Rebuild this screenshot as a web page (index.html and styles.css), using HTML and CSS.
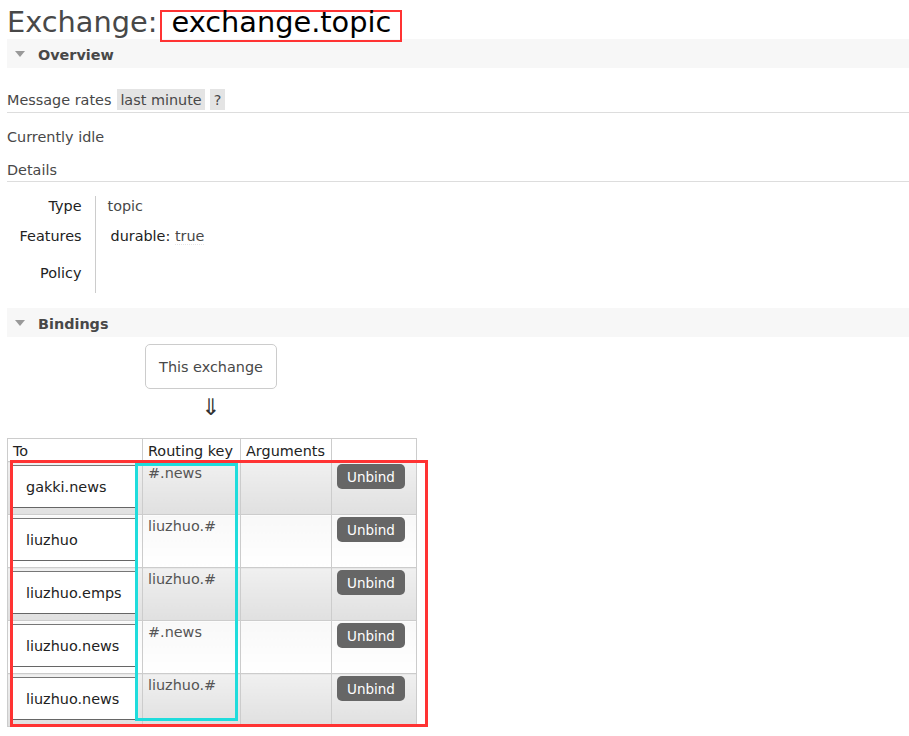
FILE: index.html
```html
<!DOCTYPE html>
<html lang="en">
<head>
<meta charset="utf-8">
<title>Exchange: exchange.topic</title>
<link rel="stylesheet" href="styles.css">
</head>
<body>
<h1 class="title">Exchange:<span class="name">exchange.topic</span></h1>

<div class="section">
  <h2 class="section-head"><span class="tri"></span>Overview</h2>
  <div class="rates"><span>Message rates</span><span class="pill first">last minute</span><span class="pill q">?</span></div>
  <p class="idle">Currently idle</p>
  <h3 class="sub">Details</h3>
  <table class="facts">
    <tr class="r1"><th>Type</th><td>topic</td></tr>
    <tr class="r2"><th>Features</th><td><span class="feat"><span class="fk">durable:</span> <span class="fv">true</span></span></td></tr>
    <tr class="r3"><th>Policy</th><td></td></tr>
  </table>
</div>

<div class="section bindings">
  <h2 class="section-head"><span class="tri"></span>Bindings</h2>
  <div class="this-ex">This exchange</div>
  <div class="arrow">⇓</div>
  <div class="bind-wrap">
    <table class="list">
      <colgroup><col class="c-to"><col class="c-key"><col class="c-args"><col class="c-act"></colgroup>
      <thead>
        <tr><th>To</th><th>Routing key</th><th>Arguments</th><th></th></tr>
      </thead>
      <tbody>
        <tr class="alt1"><td class="to"><span class="qbox">gakki.news</span></td><td class="key">#.news</td><td></td><td><button class="unbind">Unbind</button></td></tr>
        <tr class="alt2"><td class="to"><span class="qbox">liuzhuo</span></td><td class="key">liuzhuo.#</td><td></td><td><button class="unbind">Unbind</button></td></tr>
        <tr class="alt1"><td class="to"><span class="qbox">liuzhuo.emps</span></td><td class="key">liuzhuo.#</td><td></td><td><button class="unbind">Unbind</button></td></tr>
        <tr class="alt2"><td class="to"><span class="qbox">liuzhuo.news</span></td><td class="key">#.news</td><td></td><td><button class="unbind">Unbind</button></td></tr>
        <tr class="alt1"><td class="to"><span class="qbox">liuzhuo.news</span></td><td class="key">liuzhuo.#</td><td></td><td><button class="unbind">Unbind</button></td></tr>
      </tbody>
    </table>
    <div class="mark-red"></div>
    <div class="mark-cyan"></div>
  </div>
</div>
</body>
</html>
```
FILE: styles.css
```css
* { box-sizing: border-box; }
html, body { margin: 0; }
body {
  padding: 0 0 0 7px;
  font-family: "DejaVu Sans", Verdana, sans-serif;
  font-size: 14.4px;
  color: #484848;
  background: #fff;
}

.title {
  margin: 0;
  height: 39px;
  padding-top: 6px;
  font-size: 28.8px;
  font-weight: normal;
  line-height: 32px;
  color: #484848;
  white-space: nowrap;
}
.title .name {
  position: relative;
  z-index: 1;
  display: inline-block;
  margin-left: 3px;
  padding: 0 9px 8px;
  line-height: 20px;
  border: 2px solid #f33;
  color: #000;
}

.section-head {
  margin: 0;
  height: 29px;
  padding: 3px 0 0 8px;
  line-height: 26px;
  background: #f7f7f7;
  font-size: 14.4px;
  font-weight: bold;
  color: #484848;
}
.tri {
  display: inline-block;
  width: 0;
  height: 0;
  border-left: 5.5px solid transparent;
  border-right: 5.5px solid transparent;
  border-top: 6px solid #999;
  vertical-align: 3px;
  margin-right: 13px;
}

.rates {
  margin-top: 21px;
  padding-bottom: 2px;
  border-bottom: 1px solid #ddd;
  line-height: 19px;
}
.pill {
  display: inline-block;
  height: 21px;
  padding: 2px 3px 0;
  background: #e4e4e4;
  margin-left: 5px;
}
.pill.first { margin-left: 6px; }
.pill.q { padding: 2px 4px 0; }

.idle {
  margin: 15px 0 0;
  line-height: 18px;
}
.sub {
  margin: 15px 0 0;
  padding-bottom: 2px;
  border-bottom: 1px solid #ddd;
  font-size: 14.4px;
  font-weight: normal;
  line-height: 18px;
}

.facts {
  border-collapse: collapse;
  margin-top: 14px;
}
.facts th, .facts td {
  vertical-align: top;
  padding: 2px 0 0;
  line-height: 17px;
}
.facts th {
  width: 88px;
  padding-right: 13px;
  text-align: right;
  border-right: 1px solid #ccc;
  font-weight: normal;
  color: #222;
}
.facts td { padding-left: 12px; }
.facts .r1 th, .facts .r1 td { height: 30px; }
.facts .r2 th, .facts .r2 td { height: 37px; }
.facts .r3 th, .facts .r3 td { height: 30px; }
.feat { padding-left: 3px; }
.fk { color: #222; }
.fv { border-bottom: 1px dotted #e4e4e4; }

.bindings { margin-top: 15px; }
.this-ex {
  width: 132px;
  height: 45px;
  margin: 7px 0 0 138px;
  border: 1px solid #ccc;
  border-radius: 5px;
  text-align: center;
  line-height: 44px;
}
.arrow {
  width: 132px;
  margin: 8px 0 0 138px;
  text-align: center;
  font-size: 23px;
  line-height: 21px;
  color: #333;
}

.bind-wrap {
  position: relative;
  width: 409px;
  margin-top: 20px;
}
.list {
  border-collapse: collapse;
  table-layout: fixed;
  width: 409px;
}
.c-to { width: 135px; }
.c-key { width: 98px; }
.c-args { width: 91px; }
.c-act { width: 85px; }
.list th, .list td {
  border: 1px solid #ccc;
  padding: 2px 5px 0;
  vertical-align: top;
  line-height: 17px;
  text-align: left;
  font-weight: normal;
}
.list th {
  height: 23px;
  padding-bottom: 1px;
  vertical-align: bottom;
  color: #222;
  background: #fff;
}
.list td { height: 53px; }
.list tr.alt1 td { background: linear-gradient(#f0f0f0, #e0e0e0); }
.list tr.alt2 td { background: linear-gradient(#f8f8f8, #ffffff); }
.list td.key { color: #555; padding-top: 3px; }
.list td.to { padding: 3px 7px 0 3px; }
.qbox {
  display: block;
  height: 43px;
  padding-left: 15px;
  background: #fff;
  border-top: 1px solid #777;
  border-bottom: 1px solid #666;
  line-height: 42px;
  color: #222;
  white-space: nowrap;
}
.unbind {
  display: block;
  height: 25px;
  padding: 0 10px;
  border: 0;
  border-radius: 5px;
  background: #666;
  color: #fff;
  font-family: "DejaVu Sans", Verdana, sans-serif;
  font-size: 13.5px;
  line-height: 26px;
}

.mark-red {
  position: absolute;
  left: 3px;
  top: 22px;
  width: 418px;
  height: 267px;
  border: 3px solid #f33;
}
.mark-cyan {
  position: absolute;
  left: 128px;
  top: 25px;
  width: 103px;
  height: 258px;
  border: 3px solid #1fdcdc;
}
```
